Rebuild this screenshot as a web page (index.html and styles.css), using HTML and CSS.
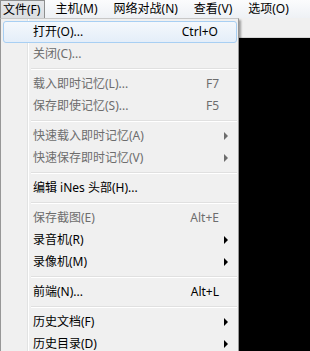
FILE: index.html
```html
<!DOCTYPE html>
<html lang="zh-CN">
<head>
    <meta charset="UTF-8">
    <meta name="viewport" content="width=device-width, initial-scale=1.0">
    <title>文件菜单</title>
    <link rel="stylesheet" href="styles.css">
</head>
<body>
    <div class="menubar">
        <span class="bar-item pressed">文件(F)</span>
        <span class="bar-item">主机(M)</span>
        <span class="bar-item">网络对战(N)</span>
        <span class="bar-item">查看(V)</span>
        <span class="bar-item">选项(O)</span>
    </div>
    <div class="workspace">
        <div class="toolstrip"></div>
        <div class="screen"></div>

        <div class="menu">
            <div class="item hover"><span class="label">打开(O)...</span><span class="key">Ctrl+O</span><span class="sub"></span></div>
            <div class="item disabled"><span class="label">关闭(C)...</span><span class="key"></span><span class="sub"></span></div>
            <div class="sep"></div>
            <div class="item disabled"><span class="label">载入即时记忆(L)...</span><span class="key">F7</span><span class="sub"></span></div>
            <div class="item disabled"><span class="label">保存即使记忆(S)...</span><span class="key">F5</span><span class="sub"></span></div>
            <div class="sep"></div>
            <div class="item disabled"><span class="label">快速载入即时记忆(A)</span><span class="key"></span><span class="sub"><i class="arrow"></i></span></div>
            <div class="item disabled"><span class="label">快速保存即时记忆(V)</span><span class="key"></span><span class="sub"><i class="arrow"></i></span></div>
            <div class="sep"></div>
            <div class="item"><span class="label">编辑 iNes 头部(H)...</span><span class="key"></span><span class="sub"></span></div>
            <div class="sep"></div>
            <div class="item disabled"><span class="label">保存截图(E)</span><span class="key">Alt+E</span><span class="sub"></span></div>
            <div class="item"><span class="label">录音机(R)</span><span class="key"></span><span class="sub"><i class="arrow"></i></span></div>
            <div class="item"><span class="label">录像机(M)</span><span class="key"></span><span class="sub"><i class="arrow"></i></span></div>
            <div class="sep"></div>
            <div class="item"><span class="label">前端(N)...</span><span class="key">Alt+L</span><span class="sub"></span></div>
            <div class="sep"></div>
            <div class="item"><span class="label">历史文档(F)</span><span class="key"></span><span class="sub"><i class="arrow"></i></span></div>
            <div class="item"><span class="label">历史目录(D)</span><span class="key"></span><span class="sub"><i class="arrow"></i></span></div>
        </div>
    </div>
</body>
</html>
```

FILE: styles.css
```css
body {
    margin: 0;
    background: #000;
    font-family: "Noto Sans", "Noto Sans CJK SC", sans-serif;
    font-size: 12px;
    color: #000;
    width: 310px;
    height: 351px;
    overflow: hidden;
}

.menubar {
    height: 18px;
    display: flex;
    align-items: stretch;
    background: linear-gradient(#fbfcfd, #eef1f5);
}

.bar-item {
    display: flex;
    align-items: center;
    padding: 0 8px;
    line-height: 16px;
}

.bar-item.pressed {
    padding: 0 4px 0 2px;
    margin-right: 2px;
    border: 1px solid #8e8f8f;
    border-bottom: none;
    background: linear-gradient(#e5e7ea, #dcdfe3);
}

.workspace {
    position: relative;
    height: 333px;
}

.toolstrip {
    height: 19px;
    background: #f0f0f0;
    border-bottom: 1px solid #d5d5d5;
}

.screen {
    height: 313px;
    background: #000;
}

.menu {
    position: absolute;
    top: 0;
    left: 0;
    width: 237px;
    padding: 2px 0;
    background: #f0f0f0;
    border: 1px solid #979797;
    border-top-color: #c8c8c8;
    box-shadow: 2px 2px 2px rgba(0, 0, 0, 0.35);
    background-image: linear-gradient(to right, transparent 26px, #e2e3e3 26px, #e2e3e3 27px, #ffffff 27px, #ffffff 28px, transparent 28px);
}

.item {
    height: 22px;
    margin: 0 1px 0 2px;
    padding-left: 30px;
    display: flex;
    align-items: center;
    box-sizing: border-box;
    line-height: 16px;
    white-space: nowrap;
}

.item.hover {
    border: 1px solid #a8cff3;
    border-radius: 3px;
    padding-left: 29px;
    background: linear-gradient(#f4f8fc, #e4eef9);
}

.item.disabled {
    color: #6d6d6d;
}

.label {
    flex: 1;
}

.key {
    text-align: right;
}

.sub {
    width: 18px;
    flex: none;
    display: flex;
    align-items: center;
}

.arrow {
    margin-left: 5px;
    width: 0;
    height: 0;
    border-top: 4px solid transparent;
    border-bottom: 4px solid transparent;
    border-left: 4px solid #000;
}

.disabled .arrow {
    border-left-color: #6d6d6d;
}

.sep {
    height: 8px;
    margin-left: 30px;
    margin-right: 1px;
    box-sizing: border-box;
    padding-top: 3px;
}

.sep::before {
    content: "";
    display: block;
    height: 1px;
    background: #e0e0e0;
    border-bottom: 1px solid #ffffff;
}
```
